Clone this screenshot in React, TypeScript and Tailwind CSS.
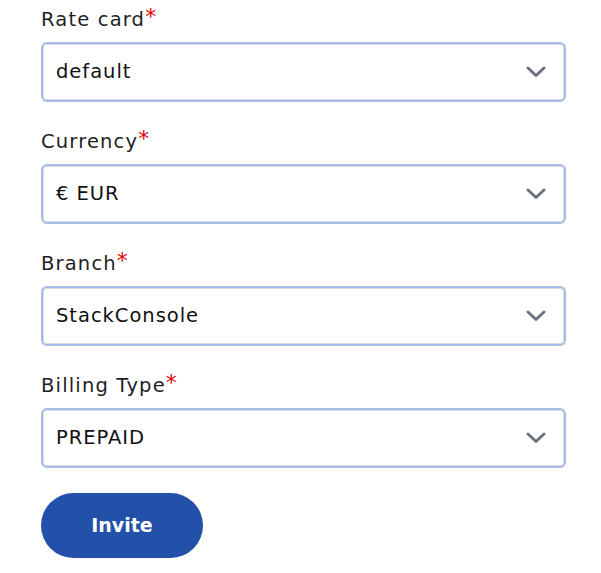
const fields = [
  { label: "Rate card", value: "default" },
  { label: "Currency", value: "€ EUR" },
  { label: "Branch", value: "StackConsole" },
  { label: "Billing Type", value: "PREPAID" },
];

function Chevron() {
  return (
    <svg width="20" height="12" viewBox="0 0 20 12" className="text-[#6b7280]">
      <polyline
        points="2,2 10,9.5 18,2"
        fill="none"
        stroke="currentColor"
        strokeWidth="3"
        strokeLinecap="round"
        strokeLinejoin="round"
      />
    </svg>
  );
}

export default function App() {
  return (
    <div
      className="w-[601px] h-[573px] bg-white pl-[41px] pr-[35px] pt-[2px]"
      style={{ fontFamily: "'DejaVu Sans', 'Open Sans', sans-serif" }}
    >
      {fields.map(({ label, value }) => (
        <div key={label} className="mb-[22px]">
          <label className="block h-[30px] text-[19.5px] tracking-[0.06em] leading-[30px] text-[#1f1f1f] mb-[10px]">
            {label}
            <span className="text-[#e00000] text-[22px] align-[2px] tracking-normal">*</span>
          </label>
          <div className="h-[60px] rounded-[6px] border-2 border-[#a7bbe3] flex items-center pl-[13px] pr-[18px] shadow-[inset_0_0_0_1px_#d6dce6]">
            <span className="flex-1 text-[19.5px] tracking-[0.05em] text-[#111]">{value}</span>
            <Chevron />
          </div>
        </div>
      ))}
      <button className="mt-[3px] w-[162px] h-[65px] rounded-full bg-[#2350a9] text-white text-[19px] font-bold">
        Invite
      </button>
    </div>
  );
}
